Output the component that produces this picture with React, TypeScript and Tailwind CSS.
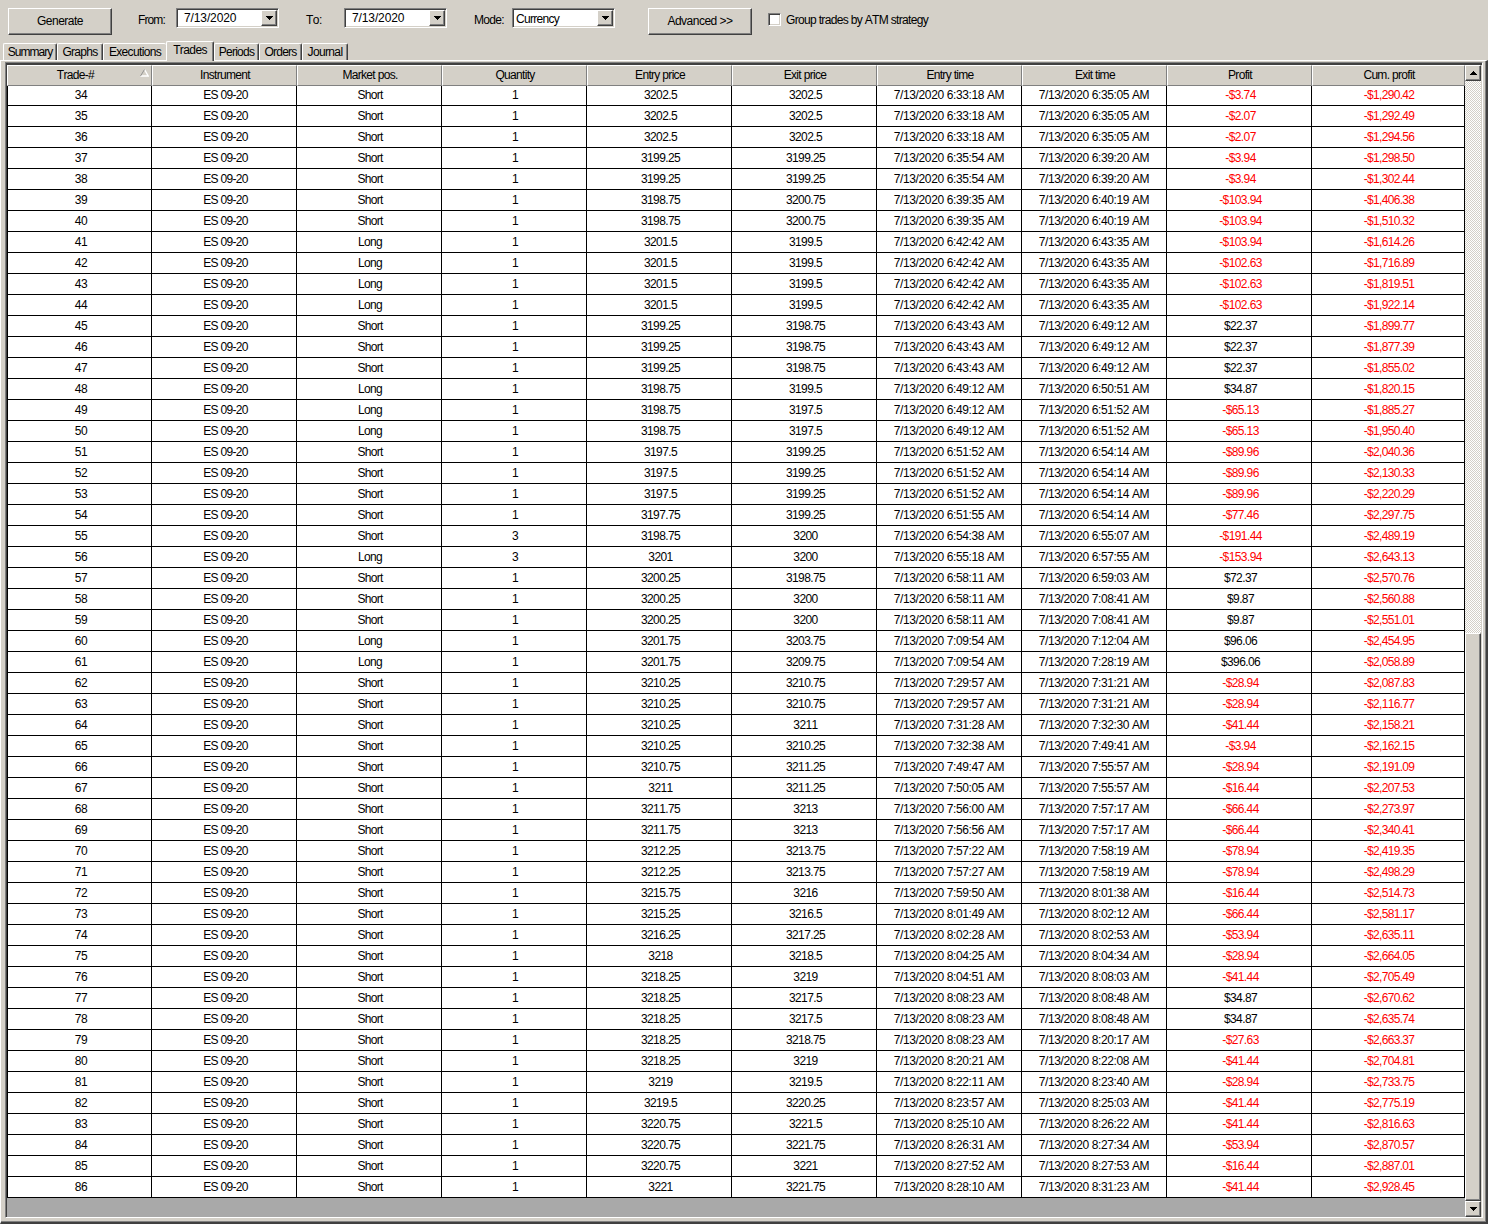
import clsx from "clsx";

type Trade = [
  id: number,
  side: string,
  qty: number,
  entry: string,
  exit: string,
  entryTime: string,
  exitTime: string,
  profit: string,
  cum: string,
];

const trades: Trade[] = [
  [34, "Short", 1, "3202.5", "3202.5", "6:33:18", "6:35:05", "-$3.74", "-$1,290.42"],
  [35, "Short", 1, "3202.5", "3202.5", "6:33:18", "6:35:05", "-$2.07", "-$1,292.49"],
  [36, "Short", 1, "3202.5", "3202.5", "6:33:18", "6:35:05", "-$2.07", "-$1,294.56"],
  [37, "Short", 1, "3199.25", "3199.25", "6:35:54", "6:39:20", "-$3.94", "-$1,298.50"],
  [38, "Short", 1, "3199.25", "3199.25", "6:35:54", "6:39:20", "-$3.94", "-$1,302.44"],
  [39, "Short", 1, "3198.75", "3200.75", "6:39:35", "6:40:19", "-$103.94", "-$1,406.38"],
  [40, "Short", 1, "3198.75", "3200.75", "6:39:35", "6:40:19", "-$103.94", "-$1,510.32"],
  [41, "Long", 1, "3201.5", "3199.5", "6:42:42", "6:43:35", "-$103.94", "-$1,614.26"],
  [42, "Long", 1, "3201.5", "3199.5", "6:42:42", "6:43:35", "-$102.63", "-$1,716.89"],
  [43, "Long", 1, "3201.5", "3199.5", "6:42:42", "6:43:35", "-$102.63", "-$1,819.51"],
  [44, "Long", 1, "3201.5", "3199.5", "6:42:42", "6:43:35", "-$102.63", "-$1,922.14"],
  [45, "Short", 1, "3199.25", "3198.75", "6:43:43", "6:49:12", "$22.37", "-$1,899.77"],
  [46, "Short", 1, "3199.25", "3198.75", "6:43:43", "6:49:12", "$22.37", "-$1,877.39"],
  [47, "Short", 1, "3199.25", "3198.75", "6:43:43", "6:49:12", "$22.37", "-$1,855.02"],
  [48, "Long", 1, "3198.75", "3199.5", "6:49:12", "6:50:51", "$34.87", "-$1,820.15"],
  [49, "Long", 1, "3198.75", "3197.5", "6:49:12", "6:51:52", "-$65.13", "-$1,885.27"],
  [50, "Long", 1, "3198.75", "3197.5", "6:49:12", "6:51:52", "-$65.13", "-$1,950.40"],
  [51, "Short", 1, "3197.5", "3199.25", "6:51:52", "6:54:14", "-$89.96", "-$2,040.36"],
  [52, "Short", 1, "3197.5", "3199.25", "6:51:52", "6:54:14", "-$89.96", "-$2,130.33"],
  [53, "Short", 1, "3197.5", "3199.25", "6:51:52", "6:54:14", "-$89.96", "-$2,220.29"],
  [54, "Short", 1, "3197.75", "3199.25", "6:51:55", "6:54:14", "-$77.46", "-$2,297.75"],
  [55, "Short", 3, "3198.75", "3200", "6:54:38", "6:55:07", "-$191.44", "-$2,489.19"],
  [56, "Long", 3, "3201", "3200", "6:55:18", "6:57:55", "-$153.94", "-$2,643.13"],
  [57, "Short", 1, "3200.25", "3198.75", "6:58:11", "6:59:03", "$72.37", "-$2,570.76"],
  [58, "Short", 1, "3200.25", "3200", "6:58:11", "7:08:41", "$9.87", "-$2,560.88"],
  [59, "Short", 1, "3200.25", "3200", "6:58:11", "7:08:41", "$9.87", "-$2,551.01"],
  [60, "Long", 1, "3201.75", "3203.75", "7:09:54", "7:12:04", "$96.06", "-$2,454.95"],
  [61, "Long", 1, "3201.75", "3209.75", "7:09:54", "7:28:19", "$396.06", "-$2,058.89"],
  [62, "Short", 1, "3210.25", "3210.75", "7:29:57", "7:31:21", "-$28.94", "-$2,087.83"],
  [63, "Short", 1, "3210.25", "3210.75", "7:29:57", "7:31:21", "-$28.94", "-$2,116.77"],
  [64, "Short", 1, "3210.25", "3211", "7:31:28", "7:32:30", "-$41.44", "-$2,158.21"],
  [65, "Short", 1, "3210.25", "3210.25", "7:32:38", "7:49:41", "-$3.94", "-$2,162.15"],
  [66, "Short", 1, "3210.75", "3211.25", "7:49:47", "7:55:57", "-$28.94", "-$2,191.09"],
  [67, "Short", 1, "3211", "3211.25", "7:50:05", "7:55:57", "-$16.44", "-$2,207.53"],
  [68, "Short", 1, "3211.75", "3213", "7:56:00", "7:57:17", "-$66.44", "-$2,273.97"],
  [69, "Short", 1, "3211.75", "3213", "7:56:56", "7:57:17", "-$66.44", "-$2,340.41"],
  [70, "Short", 1, "3212.25", "3213.75", "7:57:22", "7:58:19", "-$78.94", "-$2,419.35"],
  [71, "Short", 1, "3212.25", "3213.75", "7:57:27", "7:58:19", "-$78.94", "-$2,498.29"],
  [72, "Short", 1, "3215.75", "3216", "7:59:50", "8:01:38", "-$16.44", "-$2,514.73"],
  [73, "Short", 1, "3215.25", "3216.5", "8:01:49", "8:02:12", "-$66.44", "-$2,581.17"],
  [74, "Short", 1, "3216.25", "3217.25", "8:02:28", "8:02:53", "-$53.94", "-$2,635.11"],
  [75, "Short", 1, "3218", "3218.5", "8:04:25", "8:04:34", "-$28.94", "-$2,664.05"],
  [76, "Short", 1, "3218.25", "3219", "8:04:51", "8:08:03", "-$41.44", "-$2,705.49"],
  [77, "Short", 1, "3218.25", "3217.5", "8:08:23", "8:08:48", "$34.87", "-$2,670.62"],
  [78, "Short", 1, "3218.25", "3217.5", "8:08:23", "8:08:48", "$34.87", "-$2,635.74"],
  [79, "Short", 1, "3218.25", "3218.75", "8:08:23", "8:20:17", "-$27.63", "-$2,663.37"],
  [80, "Short", 1, "3218.25", "3219", "8:20:21", "8:22:08", "-$41.44", "-$2,704.81"],
  [81, "Short", 1, "3219", "3219.5", "8:22:11", "8:23:40", "-$28.94", "-$2,733.75"],
  [82, "Short", 1, "3219.5", "3220.25", "8:23:57", "8:25:03", "-$41.44", "-$2,775.19"],
  [83, "Short", 1, "3220.75", "3221.5", "8:25:10", "8:26:22", "-$41.44", "-$2,816.63"],
  [84, "Short", 1, "3220.75", "3221.75", "8:26:31", "8:27:34", "-$53.94", "-$2,870.57"],
  [85, "Short", 1, "3220.75", "3221", "8:27:52", "8:27:53", "-$16.44", "-$2,887.01"],
  [86, "Short", 1, "3221", "3221.75", "8:28:10", "8:31:23", "-$41.44", "-$2,928.45"],
];

const columns = [
  "Trade-#",
  "Instrument",
  "Market pos.",
  "Quantity",
  "Entry price",
  "Exit price",
  "Entry time",
  "Exit time",
  "Profit",
  "Cum. profit",
];

// text placement per grid column
const cellStyles = [
  "pl-[4px] tracking-[-0.5px]",
  "pl-[3px] tracking-[-0.7px]",
  "pl-[2px] tracking-[-0.7px]",
  "pl-[2px] tracking-[-0.5px]",
  "pl-[3px] tracking-[-0.6px]",
  "pl-[3px] tracking-[-0.6px]",
  "pl-0 tracking-[-0.38px]",
  "pl-0 tracking-[-0.38px]",
  "pl-[3px] tracking-[-0.6px]",
  "pl-[2px] tracking-[-0.67px]",
];

const tabs = [
  { label: "Summary", width: "w-[54px]", tracking: "tracking-[-1px]" },
  { label: "Graphs", width: "w-[46px]", tracking: "tracking-[-0.7px]" },
  { label: "Executions", width: "w-[63px]", tracking: "tracking-[-0.65px]" },
  { label: "Trades", width: "w-[48px]", tracking: "tracking-[-0.6px]", active: true },
  { label: "Periods", width: "w-[45px]", tracking: "tracking-[-0.75px]" },
  { label: "Orders", width: "w-[43px]", tracking: "tracking-[-0.8px]" },
  { label: "Journal", width: "w-[46px]", tracking: "tracking-[-0.65px]" },
];

const gridCols = "grid grid-cols-[145px_145px_145px_145px_145px_145px_145px_145px_145px_153px]";

const raised =
  "border border-t-white border-l-white border-r-[#404040] border-b-[#404040] bg-[#d4d0c8] shadow-[inset_-1px_-1px_0_#808080]";

function Arrow({ up }: { up?: boolean }) {
  return (
    <svg width="7" height="4" viewBox="0 0 7 4" shapeRendering="crispEdges">
      <path d={up ? "M3 0h1v1h1v1h1v1h1v1H0V3h1V2h1V1h1z" : "M0 0h7v1H6v1H5v1H4v1H3V3H2V2H1V1H0z"} />
    </svg>
  );
}

function Button({ label }: { label: string }) {
  return (
    <button className={clsx(raised, "h-[27px] w-[104px] shrink-0 pb-px text-center")}>
      {label}
    </button>
  );
}

function Select({ value, date }: { value: string; date?: boolean }) {
  return (
    <div className="flex h-5 w-[103px] shrink-0 border border-t-[#808080] border-l-[#808080] border-r-white border-b-white bg-white pr-px pb-px shadow-[inset_1px_1px_0_#404040,inset_-1px_-1px_0_#d4d0c8]">
      <span
        className={clsx(
          "flex-1 leading-[18px]",
          date ? "pl-[7px] tracking-[-0.12px]" : "pt-px pl-[3px] tracking-[-0.7px]",
        )}
      >
        {value}
      </span>
      <span className={clsx(raised, "mt-px flex h-4 w-4 items-center justify-center")}>
        <Arrow />
      </span>
    </div>
  );
}

function ScrollBar() {
  return (
    <div className="flex w-4 flex-col bg-[repeating-conic-gradient(#fff_0_25%,#d4d0c8_0_50%)] bg-[length:2px_2px]">
      <div className={clsx(raised, "flex h-4 items-center justify-center")}>
        <Arrow up />
      </div>
      <div className="h-[552px]" />
      <div className={clsx(raised, "flex-1")} />
      <div className={clsx(raised, "flex h-4 items-center justify-center")}>
        <Arrow />
      </div>
    </div>
  );
}

function TradeRow({ trade }: { trade: Trade }) {
  const [id, side, qty, entry, exit, entryTime, exitTime, profit, cum] = trade;
  const cells = [
    id,
    "ES 09-20",
    side,
    qty,
    entry,
    exit,
    `7/13/2020 ${entryTime} AM`,
    `7/13/2020 ${exitTime} AM`,
    profit,
    cum,
  ];

  return (
    <div className={clsx(gridCols, "h-[21px] leading-5")}>
      {cells.map((cell, i) => (
        <div
          key={i}
          className={clsx(
            "border-r border-b border-black text-center whitespace-nowrap",
            cellStyles[i],
            String(cell).startsWith("-") && "text-[#ff0000]",
          )}
        >
          {cell}
        </div>
      ))}
    </div>
  );
}

export default function App() {
  return (
    <div className="flex h-[1224px] w-[1488px] flex-col overflow-hidden bg-[#d4d0c8] font-['Liberation_Sans',Arial,sans-serif] text-[12px] tracking-[-0.5px] text-black [font-kerning:none]">
      <div className="flex h-[41px] shrink-0 items-start pt-2 pl-2">
        <Button label="Generate" />
        <span className="w-[64px] pt-[3px] pl-[26px] leading-[18px] tracking-[-0.9px]">From:</span>
        <Select value="7/13/2020" date />
        <span className="w-[65px] pt-[3px] pl-[27px] leading-[18px]">To:</span>
        <Select value="7/13/2020" date />
        <span className="w-[65px] pt-[3px] pl-[27px] leading-[18px] tracking-[-0.7px]">Mode:</span>
        <Select value="Currency" />
        <span className="w-[33px]" />
        <Button label="Advanced >>" />
        <label className="flex pt-[3px] pl-4 leading-[18px] tracking-[-0.67px]">
          <span className="mt-[2px] mr-[5px] h-[13px] w-[13px] border border-t-[#808080] border-l-[#808080] border-r-white border-b-white bg-white shadow-[inset_1px_1px_0_#404040,inset_-1px_-1px_0_#d4d0c8]" />
          Group trades by ATM strategy
        </label>
      </div>

      <div className="flex h-[19px] shrink-0 items-end pl-[3px]">
        {tabs.map((tab) => (
          <div
            key={tab.label}
            className={clsx(
              "shrink-0 rounded-t-[2px] border-t border-l border-white text-center whitespace-nowrap",
              tab.width,
              tab.tracking,
              tab.active ? "relative z-10 -mb-px h-5 leading-[17px]" : "h-[17px] leading-4",
              tab.label !== "Executions" && "border-r border-r-[#404040] shadow-[inset_-1px_0_0_#808080]",
              tab.active && "bg-[#d4d0c8]",
            )}
          >
            {tab.label}
          </div>
        ))}
      </div>

      <div className="flex min-h-0 flex-1 border-t border-r-2 border-b-2 border-l border-t-white border-r-[#404040] border-b-[#404040] border-l-white pt-px pr-[3px] pb-[4px] pl-[4px] shadow-[inset_-1px_-1px_0_#808080]">
        <div className="flex flex-1 border border-t-[#808080] border-l-[#808080] border-r-white border-b-white">
          <div className="flex flex-1 border-t-2 border-l border-[#404040]">
            <div className="flex w-[1458px] flex-col bg-[#a9a9a9]">
              <div className={clsx(gridCols, "h-5 leading-[19px] tracking-[-0.68px]")}>
                {columns.map((name, i) => (
                  <div
                    key={name}
                    className={clsx(
                      "relative border border-t-white border-l-white border-r-[#808080] border-b-[#808080] bg-[#d4d0c8] text-center",
                      i === 0 ? "pr-[8px]" : "pl-px",
                    )}
                  >
                    {name}
                    {i === 0 && (
                      <svg className="absolute top-[3px] right-[2px]" width="9" height="8" viewBox="0 0 9 8" fill="none">
                        <path d="M4.5 0.5L8.2 7H0.5" stroke="#fff" strokeWidth="1.4" />
                        <path d="M0.5 7L4.5 0.5" stroke="#909090" />
                      </svg>
                    )}
                  </div>
                ))}
              </div>
              <div className="bg-white shadow-[inset_1px_0_0_#000]">
                {trades.map((trade) => (
                  <TradeRow key={trade[0]} trade={trade} />
                ))}
              </div>
            </div>
            <ScrollBar />
          </div>
        </div>
      </div>
    </div>
  );
}
